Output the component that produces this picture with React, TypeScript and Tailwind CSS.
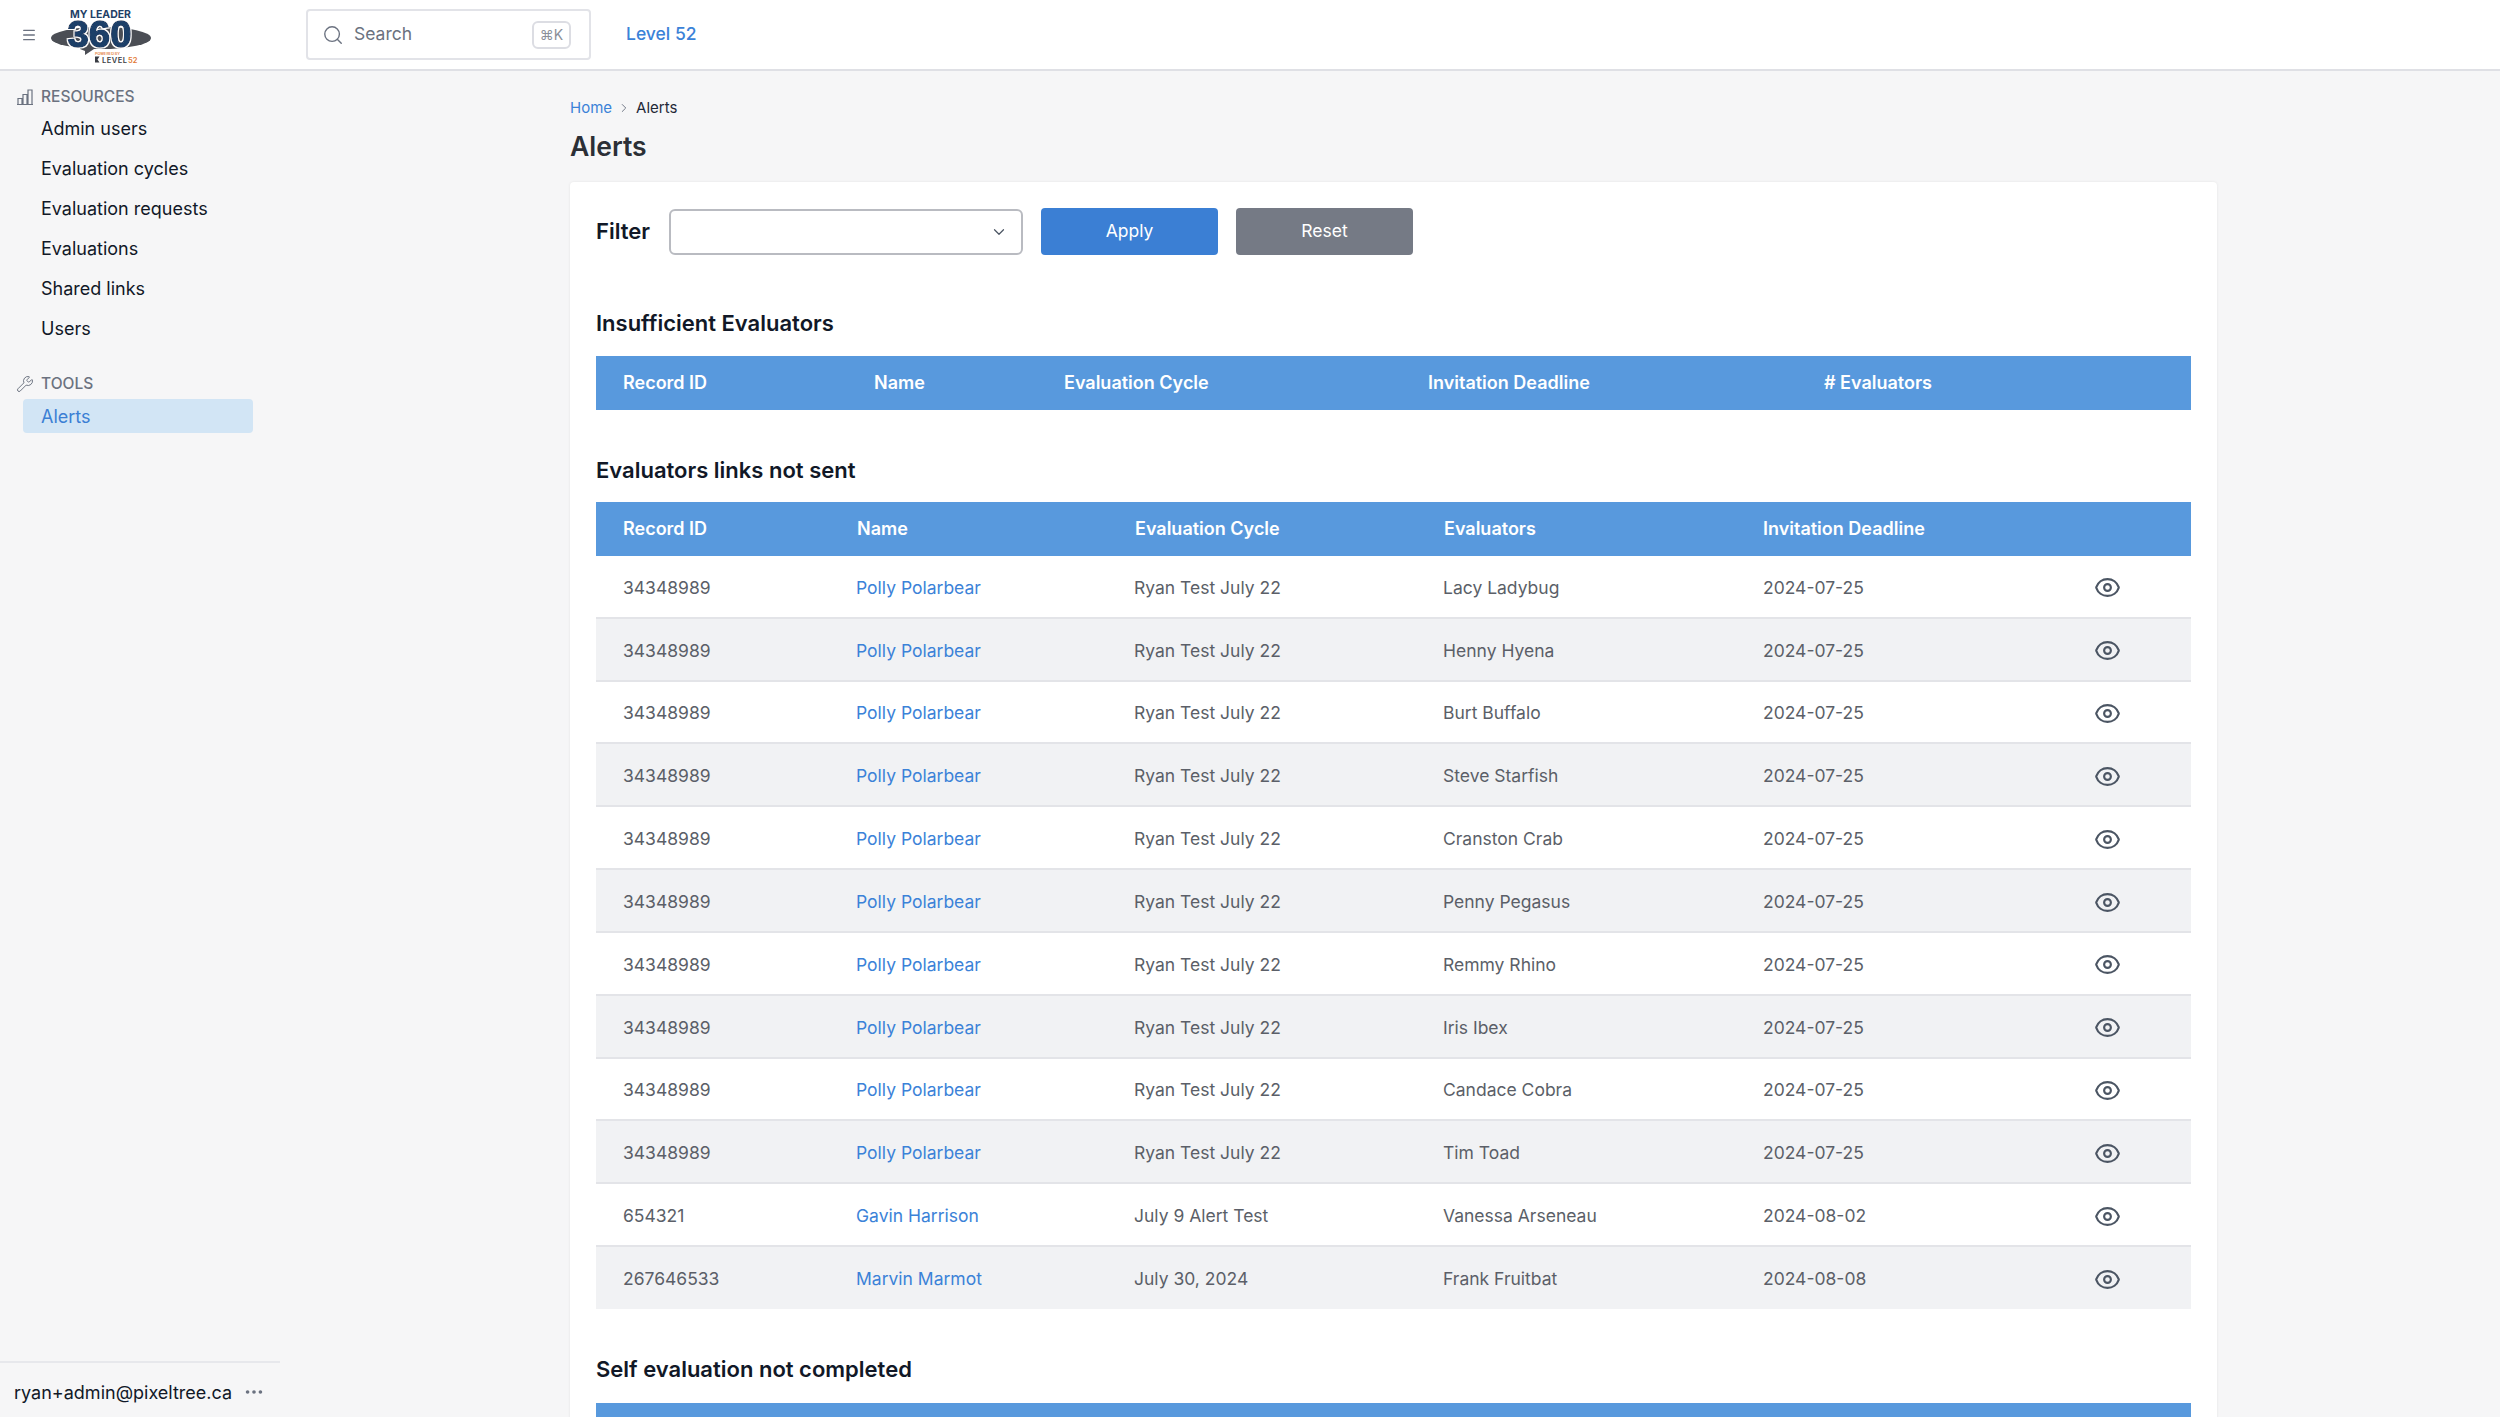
import { ChevronDown, ChevronRight, Ellipsis, Menu, Search, Wrench } from 'lucide-react';

const RESOURCE_LINKS = ['Admin users', 'Evaluation cycles', 'Evaluation requests', 'Evaluations', 'Shared links', 'Users'];

const ROWS = [
  { id: '34348989', name: 'Polly Polarbear', cycle: 'Ryan Test July 22', evaluator: 'Lacy Ladybug', deadline: '2024-07-25' },
  { id: '34348989', name: 'Polly Polarbear', cycle: 'Ryan Test July 22', evaluator: 'Henny Hyena', deadline: '2024-07-25' },
  { id: '34348989', name: 'Polly Polarbear', cycle: 'Ryan Test July 22', evaluator: 'Burt Buffalo', deadline: '2024-07-25' },
  { id: '34348989', name: 'Polly Polarbear', cycle: 'Ryan Test July 22', evaluator: 'Steve Starfish', deadline: '2024-07-25' },
  { id: '34348989', name: 'Polly Polarbear', cycle: 'Ryan Test July 22', evaluator: 'Cranston Crab', deadline: '2024-07-25' },
  { id: '34348989', name: 'Polly Polarbear', cycle: 'Ryan Test July 22', evaluator: 'Penny Pegasus', deadline: '2024-07-25' },
  { id: '34348989', name: 'Polly Polarbear', cycle: 'Ryan Test July 22', evaluator: 'Remmy Rhino', deadline: '2024-07-25' },
  { id: '34348989', name: 'Polly Polarbear', cycle: 'Ryan Test July 22', evaluator: 'Iris Ibex', deadline: '2024-07-25' },
  { id: '34348989', name: 'Polly Polarbear', cycle: 'Ryan Test July 22', evaluator: 'Candace Cobra', deadline: '2024-07-25' },
  { id: '34348989', name: 'Polly Polarbear', cycle: 'Ryan Test July 22', evaluator: 'Tim Toad', deadline: '2024-07-25' },
  { id: '654321', name: 'Gavin Harrison', cycle: 'July 9 Alert Test', evaluator: 'Vanessa Arseneau', deadline: '2024-08-02' },
  { id: '267646533', name: 'Marvin Marmot', cycle: 'July 30, 2024', evaluator: 'Frank Fruitbat', deadline: '2024-08-08' },
];

function Logo() {
  return (
    <svg viewBox="0 0 102 56" className="h-[56px] w-[102px] shrink-0">
      <defs>
        <filter id="halo" x="-10%" y="-10%" width="120%" height="120%">
          <feMorphology in="SourceAlpha" operator="dilate" radius="1.3" result="grown" />
          <feFlood floodColor="#ffffff" />
          <feComposite in2="grown" operator="in" />
          <feMerge>
            <feMergeNode />
            <feMergeNode in="SourceGraphic" />
          </feMerge>
        </filter>
      </defs>
      <text x="50.5" y="10.5" textAnchor="middle" fontFamily="Inter, sans-serif" fontWeight="700" fontSize="11" fill="#1f3f66" textLength="61" lengthAdjust="spacingAndGlyphs">MY LEADER</text>
      <ellipse cx="51" cy="31" rx="50" ry="11" fill="#4b4e55" />
      <path d="M30 39 L35 39 L35 37 L44 42 L35 48 L35 44 L30 42 Z" fill="#4b4e55" />
      <text x="49.5" y="39.5" textAnchor="middle" fontFamily="'Liberation Sans', sans-serif" fontWeight="700" fontSize="36" fill="#1d3f68" stroke="#1d3f68" strokeWidth="1.4" filter="url(#halo)" textLength="64" lengthAdjust="spacingAndGlyphs">360</text>
      <text x="45" y="48" fontFamily="Inter, sans-serif" fontWeight="600" fontSize="3" fill="#e27a36" textLength="25" lengthAdjust="spacingAndGlyphs">POWERED BY</text>
      <path d="M45 49.5 h4.5 l-2 3 l2 3 h-4.5 z" fill="#3a3d44" />
      <text x="52" y="55.5" fontFamily="Inter, sans-serif" fontWeight="600" fontSize="7.5" fill="#3a3d44" textLength="25" lengthAdjust="spacing">LEVEL</text>
      <text x="78" y="55.5" fontFamily="Inter, sans-serif" fontWeight="600" fontSize="7.5" fill="#e27a36" textLength="9.5" lengthAdjust="spacing">52</text>
    </svg>
  );
}

function BarsIcon() {
  return (
    <svg viewBox="0 0 18 18" fill="none" stroke="#6b7280" strokeWidth="1.2" className="h-[18px] w-[18px] shrink-0">
      <path d="M1 16.5h16M2 16.5v-6h4v6M7 16.5v-10h4v10M12 16.5V2h4v14.5" />
    </svg>
  );
}

function EyeIcon() {
  return (
    <svg viewBox="0 0 24 24" fill="none" stroke="#4b5563" strokeWidth="1.9" className="h-[27px] w-[27px]">
      <path strokeLinecap="round" strokeLinejoin="round" d="M2.036 12.322a1.012 1.012 0 010-.639C3.423 7.51 7.36 4.5 12 4.5c4.638 0 8.573 3.007 9.963 7.178.07.207.07.431 0 .639C20.577 16.49 16.64 19.5 12 19.5c-4.638 0-8.573-3.007-9.963-7.178z" />
      <path strokeLinecap="round" strokeLinejoin="round" d="M15 12a3 3 0 11-6 0 3 3 0 016 0z" />
    </svg>
  );
}

function Sidebar() {
  return (
    <aside className="flex w-[280px] shrink-0 flex-col">
      <div className="flex-1 pt-[16px]">
        <div className="flex h-[20px] items-center gap-[7px] pl-[16px] text-[15.5px] font-medium text-[#6b7280]">
          <BarsIcon />
          RESOURCES
        </div>
        <nav className="mt-[1px]">
          {RESOURCE_LINKS.map((link) => (
            <div key={link} className="flex h-[40px] items-center pl-[41px] text-[18px] text-[#111827]">
              {link}
            </div>
          ))}
        </nav>
        <div className="mt-[26px] flex h-[20px] items-center gap-[7px] pl-[16px] text-[15.5px] font-medium text-[#6b7280]">
          <Wrench size={18} strokeWidth={1.3} />
          TOOLS
        </div>
        <div className="ml-[23px] mt-[5px] flex h-[34px] w-[230px] items-center rounded-[4px] bg-[#d2e5f5] pl-[18px] text-[18px] text-[#3b7fd4]">
          Alerts
        </div>
      </div>
      <div className="flex h-[56px] items-center gap-[10px] border-t-2 border-[#e7e8ec] pl-[14px] pt-[4px] text-[18px] text-[#111827]">
        ryan+admin@pixeltree.ca
        <Ellipsis size={22} className="ml-[1px] text-[#6b7280]" />
      </div>
    </aside>
  );
}

function HeaderCell({ children }: { children?: React.ReactNode }) {
  return <div className="pb-[1px] pl-[27px] text-[18px] font-semibold text-white">{children}</div>;
}

function AlertsTable() {
  const cols = 'grid grid-cols-[234px_278px_309px_319px_288px_1fr] items-center';
  return (
    <div>
      <div className={`${cols} h-[54px] bg-[#5899dd]`}>
        <HeaderCell>Record ID</HeaderCell>
        <HeaderCell>Name</HeaderCell>
        <HeaderCell>Evaluation Cycle</HeaderCell>
        <HeaderCell>Evaluators</HeaderCell>
        <HeaderCell>Invitation Deadline</HeaderCell>
        <HeaderCell />
      </div>
      {ROWS.map((row, i) => (
        <div
          key={row.evaluator}
          className={`${cols} h-[62.83px] border-b-2 border-[#e3e4e8] pt-[3px] text-[17.5px] text-[#5b5f68] first:h-[63.83px] last:h-[61.83px] last:border-b-0 ${i % 2 === 1 ? 'bg-[#f1f2f4]' : 'bg-white'}`}
        >
          <div className="pl-[27px]">{row.id}</div>
          <div className="pl-[26px] text-[#3b82d8]">{row.name}</div>
          <div className="pl-[26px]">{row.cycle}</div>
          <div className="pl-[26px]">{row.evaluator}</div>
          <div className="pl-[27px]">{row.deadline}</div>
          <div className="flex justify-center">
            <EyeIcon />
          </div>
        </div>
      ))}
    </div>
  );
}

export default function App() {
  return (
    <div className="flex h-screen flex-col overflow-hidden bg-[#f6f6f7] font-['Inter',sans-serif]">
      <header className="flex h-[71px] shrink-0 items-center border-b-2 border-[#dfe0e5] bg-white pl-[21px]">
        <Menu size={16} strokeWidth={2} className="text-[#6b7280]" />
        <div className="ml-[13px]">
          <Logo />
        </div>
        <div className="ml-[154px] flex h-[51px] w-[285px] items-center rounded-[4px] border-2 border-[#e2e3e8] pl-[14px] pr-[18px]">
          <Search size={22} strokeWidth={1.5} className="text-[#6b7280]" />
          <span className="ml-[10px] flex-1 text-[17.5px] text-[#6b7280]">Search</span>
          <span className="flex h-[28px] w-[39px] items-center justify-center rounded-[6px] border-2 border-[#dcdde3] text-[14px] text-[#8b8f99]">⌘K</span>
        </div>
        <span className="ml-[35px] text-[17.5px] font-medium text-[#3b82d8]">Level 52</span>
      </header>
      <div className="flex min-h-0 flex-1">
        <Sidebar />
        <main className="min-w-0 flex-1 pl-[290px] pr-[283px]">
          <div className="mt-[27px] flex h-[20px] items-center text-[15px]">
            <span className="text-[#3b82d8]">Home</span>
            <ChevronRight size={14} strokeWidth={1.6} className="mx-[5px] text-[#6b7280]" />
            <span className="text-[#1f2937]">Alerts</span>
          </div>
          <h1 className="mt-[10px] h-[36px] text-[26.5px] font-semibold leading-[36px] text-[#2b2f36]">Alerts</h1>
          <section className="mt-[18px] rounded-[4px] bg-white px-[26px] pb-[40px] pt-[26px] shadow-[0_0_3px_rgba(0,0,0,0.08)]">
            <div className="flex h-[47px] items-center">
              <span className="w-[73px] text-[22px] font-semibold text-[#111827]">Filter</span>
              <div className="flex h-[46px] w-[354px] items-center justify-end rounded-[6px] border-2 border-[#b9bbc1] pr-[13px]">
                <ChevronDown size={18} strokeWidth={1.6} className="text-[#4b5563]" />
              </div>
              <button className="ml-[18px] h-[47px] w-[177px] rounded-[4px] bg-[#3b7fd4] text-[17.5px] text-white">Apply</button>
              <button className="ml-[18px] h-[47px] w-[177px] rounded-[4px] bg-[#757a85] text-[17.5px] text-white">Reset</button>
            </div>
            <h2 className="mt-[54px] h-[28px] text-[22px] font-semibold leading-[28px] text-[#111827]">Insufficient Evaluators</h2>
            <div className="mt-[19px] grid h-[54px] grid-cols-[251px_190px_364px_396px_1fr] items-center bg-[#5899dd]">
              <HeaderCell>Record ID</HeaderCell>
              <HeaderCell>Name</HeaderCell>
              <HeaderCell>Evaluation Cycle</HeaderCell>
              <HeaderCell>Invitation Deadline</HeaderCell>
              <HeaderCell># Evaluators</HeaderCell>
            </div>
            <h2 className="mt-[46px] h-[28px] text-[22px] font-semibold leading-[28px] text-[#111827]">Evaluators links not sent</h2>
            <div className="mt-[18px]">
              <AlertsTable />
            </div>
            <h2 className="mt-[46px] h-[28px] text-[22px] font-semibold leading-[28px] text-[#111827]">Self evaluation not completed</h2>
            <div className="mt-[20px] h-[54px] bg-[#5899dd]" />
          </section>
        </main>
      </div>
    </div>
  );
}
